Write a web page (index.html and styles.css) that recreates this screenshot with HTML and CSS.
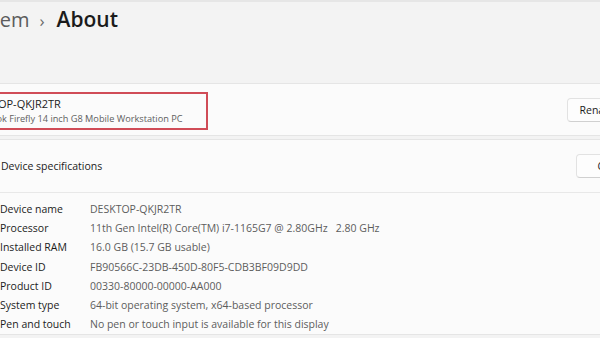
FILE: index.html
```html
<!DOCTYPE html>
<html lang="en">
<head>
    <meta charset="UTF-8">
    <title>About</title>
    <link rel="stylesheet" href="styles.css">
</head>
<body>
    <div class="page">
        <h1 class="crumbs">
            <span class="parent">System</span>
            <span class="chev">&#8250;</span>
            <span class="current">About</span>
        </h1>

        <div class="card device">
            <div class="highlight">
                <div class="pc-name">DESKTOP-QKJR2TR</div>
                <div class="pc-model">HP ZBook Firefly 14 inch G8 Mobile Workstation PC</div>
            </div>
            <button class="btn rename">Rename this PC</button>
        </div>

        <div class="card expander">
            <div class="exp-head">
                <span class="exp-title">Device specifications</span>
                <button class="btn copy">Copy</button>
            </div>
            <div class="specs">
                <div class="row"><span class="key">Device name</span><span class="val">DESKTOP-QKJR2TR</span></div>
                <div class="row"><span class="key">Processor</span><span class="val">11th Gen Intel(R) Core(TM) i7-1165G7 @ 2.80GHz &nbsp; 2.80 GHz</span></div>
                <div class="row"><span class="key">Installed RAM</span><span class="val">16.0 GB (15.7 GB usable)</span></div>
                <div class="row"><span class="key">Device ID</span><span class="val">FB90566C-23DB-450D-80F5-CDB3BF09D9DD</span></div>
                <div class="row"><span class="key">Product ID</span><span class="val">00330-80000-00000-AA000</span></div>
                <div class="row"><span class="key">System type</span><span class="val">64-bit operating system, x64-based processor</span></div>
                <div class="row"><span class="key">Pen and touch</span><span class="val">No pen or touch input is available for this display</span></div>
            </div>
        </div>
    </div>
</body>
</html>
```

FILE: styles.css
```css
body {
    margin: 0;
    background: #f3f3f3;
    font-family: "Open Sans", "Noto Sans", sans-serif;
    color: #1b1b1b;
    overflow: hidden;
    border-top: 2px solid #e6e6e6;
}
.page {
    width: 800px;
    margin-left: -60px;
}
.crumbs {
    margin: 0;
    padding: 3px 0 0 22px;
    height: 81px;
    box-sizing: border-box;
    font-size: 21px;
    font-weight: 600;
    display: flex;
    align-items: baseline;
}
.parent {
    color: #5c5c5c;
    font-weight: 500;
    font-size: 20px;
}
.chev {
    color: #6a6a6a;
    font-size: 17px;
    margin: 0 12px 0 10px;
    font-weight: 400;
}
.card {
    background: #fbfbfb;
    border: 1px solid #e5e5e5;
    border-radius: 4px;
}
.device {
    height: 53px;
    box-sizing: border-box;
    display: flex;
    align-items: flex-start;
    justify-content: space-between;
    padding: 8px 0 0 12px;
}
.highlight {
    border: 2px solid #d04c57;
    width: 255px;
    height: 38px;
    box-sizing: border-box;
    padding: 2px 0 0 10px;
    white-space: nowrap;
}
.pc-name {
    font-size: 11px;
    line-height: 16px;
}
.pc-model {
    font-size: 9.2px;
    line-height: 13px;
    color: #606060;
}
.btn {
    font-family: inherit;
    font-size: 10.5px;
    color: #1b1b1b;
    background: #fdfdfd;
    border: 1px solid #e2e2e2;
    border-bottom-color: #d0d0d0;
    border-radius: 4px;
    height: 24px;
    padding: 0 12px;
}
.rename {
    margin: 6px 70px 0 0;
}
.expander {
    margin-top: 3px;
}
.exp-head {
    height: 53px;
    box-sizing: border-box;
    display: flex;
    align-items: center;
    justify-content: space-between;
    padding-left: 60px;
    border-bottom: 1px solid #e8e8e8;
}
.exp-title {
    font-size: 10.5px;
}
.copy {
    margin-right: 96px;
    padding: 0 20px;
}
.specs {
    padding: 6px 0 0 59px;
}
.row {
    display: flex;
    height: 19.3px;
    align-items: center;
    font-size: 10.5px;
}
.key {
    width: 90px;
    color: #1b1b1b;
}
.val {
    color: #5d5d5d;
}
```
